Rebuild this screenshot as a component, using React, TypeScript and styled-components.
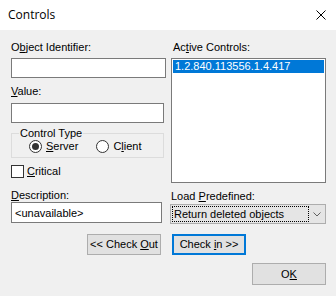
import React from 'react'
import styled, { createGlobalStyle } from 'styled-components'

const GlobalStyle = createGlobalStyle`
    html, body {
        margin: 0;
        padding: 0;
        background: #f0f0f0;
    }
    * {
        box-sizing: border-box;
    }
`

const Window = styled.div`
    width: 336px;
    height: 296px;
    background: #f0f0f0;
    font-family: 'Liberation Sans', Arial, sans-serif;
    font-size: 11px;
    line-height: 13px;
    color: #000000;
    overflow: hidden;
`

const TitleBar = styled.div`
    height: 30px;
    background: #ffffff;
    display: flex;
    align-items: center;
    justify-content: space-between;
    padding: 0 10px 0 8px;
`

const TitleText = styled.span`
    font-family: 'Open Sans', sans-serif;
    font-weight: 400;
    font-size: 12px;
    line-height: 16px;
    margin-top: -1px;
`

const CloseIcon = styled.svg`
    width: 10px;
    height: 10px;
    margin-top: -1px;
`

const Body = styled.div`
    display: grid;
    grid-template-columns: 155px 156px;
    column-gap: 4px;
    padding: 11px 0 0 11px;
`

const Column = styled.div`
    display: flex;
    flex-direction: column;
`

const Label = styled.div<{ top: number; indent?: number }>`
    margin-top: ${p => p.top}px;
    padding-left: ${p => p.indent ?? 0}px;
    height: 13px;
    white-space: nowrap;
`

const Key = styled.span`
    text-decoration: underline;
    text-underline-offset: 1px;
`

const TextBox = styled.input<{ top: number; w: number; h: number }>`
    margin: ${p => p.top}px 0 0 0;
    width: ${p => p.w}px;
    height: ${p => p.h}px;
    border: 1px solid #7a7a7a;
    background: #ffffff;
    padding: 0 3px;
    font: inherit;
    color: #000000;
    outline: none;
`

const GroupBox = styled.fieldset`
    margin: 4px 0 0 0;
    width: 153px;
    padding: 0 0 4px 0;
    border: 1px solid #dcdcdc;
    min-width: 0;
`

const GroupLegend = styled.legend`
    margin-left: 7px;
    padding: 0 1px;
    line-height: 13px;
`

const RadioRow = styled.div`
    display: flex;
    align-items: center;
    height: 13px;
    padding-left: 17px;
`

const Choice = styled.div<{ gap: number }>`
    display: flex;
    align-items: center;
    margin-right: ${p => p.gap}px;
`

const RadioCircle = styled.span<{ checked?: boolean }>`
    width: 13px;
    height: 13px;
    border-radius: 50%;
    border: 1px solid #333333;
    background: #ffffff;
    margin-right: 4px;
    display: flex;
    align-items: center;
    justify-content: center;
    &::after {
        content: '';
        width: 7px;
        height: 7px;
        border-radius: 50%;
        background: ${p => (p.checked ? '#333333' : 'transparent')};
    }
`

const CheckRow = styled.div`
    margin-top: 7px;
    display: flex;
    align-items: center;
    height: 13px;
`

const CheckBox = styled.span`
    width: 13px;
    height: 13px;
    border: 1px solid #333333;
    background: #ffffff;
    margin-right: 3px;
`

const ListBox = styled.div`
    margin: 4px 0 0 1px;
    width: 155px;
    height: 125px;
    border: 1px solid #7a7a7a;
    background: #ffffff;
    padding: 1px;
`

const ListItem = styled.div<{ selected?: boolean }>`
    height: 13px;
    padding-left: 2px;
    background: ${p => (p.selected ? '#0078d7' : 'transparent')};
    color: ${p => (p.selected ? '#ffffff' : '#000000')};
`

const ComboBox = styled.div`
    margin-top: 1px;
    width: 156px;
    height: 20px;
    border: 1px solid #adadad;
    background: #e5e5e5;
    display: flex;
    align-items: center;
    padding: 0 4px 0 1px;
`

const ComboFocus = styled.div`
    flex: 1;
    height: 16px;
    border: 1px dotted #000000;
    padding-left: 1px;
    display: flex;
    align-items: center;
    margin-right: 4px;
`

const Chevron = styled.svg`
    width: 8px;
    height: 5px;
`

const ButtonRow = styled.div`
    grid-column: 1 / span 2;
    display: grid;
    grid-template-columns: 155px 156px;
    column-gap: 4px;
    margin-top: 10px;
`

const Cell = styled.div<{ align: 'start' | 'end' }>`
    display: flex;
    justify-content: ${p => (p.align === 'end' ? 'flex-end' : 'flex-start')};
    padding: ${p => (p.align === 'end' ? '0 5px 0 0' : '0 0 0 2px')};
`

const Button = styled.button<{ focused?: boolean }>`
    width: 74px;
    height: 21px;
    padding: 0;
    margin: 0;
    background: #e1e1e1;
    border: ${p => (p.focused ? '2px solid #0078d7' : '1px solid #adadad')};
    font: inherit;
    color: #000000;
    display: flex;
    align-items: center;
    justify-content: center;
    white-space: pre;
`

const FooterRow = styled.div`
    grid-column: 1 / span 2;
    display: flex;
    justify-content: flex-end;
    margin-top: 8px;
`

const OkButton = styled(Button)`
    height: 22px;
`

const App: React.FC = () => (
    <Window>
        <GlobalStyle />
        <TitleBar>
            <TitleText>Controls</TitleText>
            <CloseIcon viewBox="0 0 10 10">
                <path d="M0.5 0.5 L9.5 9.5 M9.5 0.5 L0.5 9.5" stroke="#000000" strokeWidth="1" fill="none" />
            </CloseIcon>
        </TitleBar>
        <Body>
            <Column>
                <Label top={0}>O<Key>b</Key>ject Identifier:</Label>
                <TextBox top={4} w={155} h={20} readOnly value="" />
                <Label top={7}><Key>V</Key>alue:</Label>
                <TextBox top={5} w={153} h={20} readOnly value="" />
                <GroupBox>
                    <GroupLegend>Control Type</GroupLegend>
                    <RadioRow>
                        <Choice gap={18}>
                            <RadioCircle checked />
                            <span><Key>S</Key>erver</span>
                        </Choice>
                        <Choice gap={0}>
                            <RadioCircle />
                            <span>C<Key>l</Key>ient</span>
                        </Choice>
                    </RadioRow>
                </GroupBox>
                <CheckRow>
                    <CheckBox />
                    <span><Key>C</Key>ritical</span>
                </CheckRow>
                <Label top={11}><Key>D</Key>escription:</Label>
                <TextBox top={0} w={151} h={21} readOnly value="<unavailable>" />
            </Column>
            <Column>
                <Label top={0} indent={3}>Ac<Key>t</Key>ive Controls:</Label>
                <ListBox>
                    <ListItem selected>1.2.840.113556.1.4.417</ListItem>
                </ListBox>
                <Label top={7} indent={1}>Load <Key>P</Key>redefined:</Label>
                <ComboBox>
                    <ComboFocus>Return deleted objects</ComboFocus>
                    <Chevron viewBox="0 0 8 5">
                        <path d="M0.5 0.5 L4 4 L7.5 0.5" stroke="#606060" strokeWidth="1" fill="none" />
                    </Chevron>
                </ComboBox>
            </Column>
            <ButtonRow>
                <Cell align="end">
                    <Button><span>&lt;&lt; Check <Key>O</Key>ut</span></Button>
                </Cell>
                <Cell align="start">
                    <Button focused><span>Check <Key>i</Key>n &gt;&gt;</span></Button>
                </Cell>
            </ButtonRow>
            <FooterRow>
                <OkButton><span>O<Key>K</Key></span></OkButton>
            </FooterRow>
        </Body>
    </Window>
)

export default App
